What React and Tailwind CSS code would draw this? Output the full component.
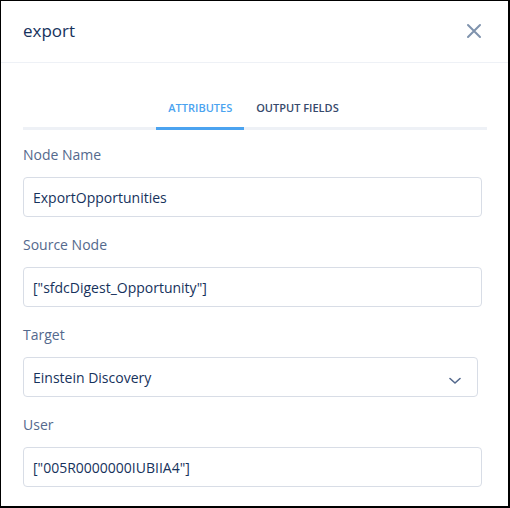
import React from "react";

const font = { fontFamily: '"Open Sans", "Noto Sans", sans-serif' };

function Field({ label, value, select }) {
  return (
    <div className="flex flex-col">
      <label className="text-[14px] leading-[20px] text-[#54698d] mb-[12px]">{label}</label>
      <div
        className={`h-[40px] rounded-[4px] border border-[#d8dde6] bg-white flex items-center px-[9px] text-[14px] text-[#16325c] ${
          select ? "w-[455px] justify-between" : "w-[459px]"
        }`}
      >
        <span>{value}</span>
        {select && (
          <svg width="12" height="8" viewBox="0 0 12 8" className="mr-[7px] mt-[8px]">
            <path d="M1 1.5 L6 6 L11 1.5" fill="none" stroke="#54698d" strokeWidth="1.6" strokeLinecap="round" strokeLinejoin="round" />
          </svg>
        )}
      </div>
    </div>
  );
}

export default function App() {
  return (
    <div
      className="w-[510px] h-[508px] bg-white border-t border-l border-r-2 border-b-2 border-black overflow-hidden flex flex-col"
      style={font}
    >
      {/* Header */}
      <div className="h-[62px] shrink-0 border-b border-[#eef1f6] flex items-center justify-between pl-[22px] pr-[25px]">
        <h2 className="text-[17px] text-[#16325c] -mt-[1px]">export</h2>
        <button className="w-[18px] h-[18px] flex items-center justify-center -mt-[2px]">
          <svg width="16" height="16" viewBox="0 0 16 16">
            <path d="M2 2 L14 14 M14 2 L2 14" stroke="#7f93ad" strokeWidth="2" strokeLinecap="round" />
          </svg>
        </button>
      </div>

      {/* Body */}
      <div className="px-[22px] flex flex-col">
        {/* Tabs */}
        <div className="mt-[35px] flex justify-center border-b-[3px] border-[#eef1f6] w-[464px]">
          <div className="flex -ml-[3px]">
            <div className="px-[12px] pb-[9px] -mb-[3px] border-b-[3px] border-[#4ba3f0] text-[11px] font-semibold text-[#4ba3f0] leading-[20px]">
              ATTRIBUTES
            </div>
            <div className="px-[12px] pb-[9px] text-[11px] font-semibold text-[#36496b] leading-[20px]">
              OUTPUT FIELDS
            </div>
          </div>
        </div>

        <div className="flex flex-col gap-[18px] mt-[15px]">
          <Field label="Node Name" value="ExportOpportunities" />
          <Field label="Source Node" value={'["sfdcDigest_Opportunity"]'} />
          <Field label="Target" value="Einstein Discovery" select />
          <Field label="User" value={'["005R0000000IUBIIA4"]'} />
        </div>
      </div>
    </div>
  );
}
